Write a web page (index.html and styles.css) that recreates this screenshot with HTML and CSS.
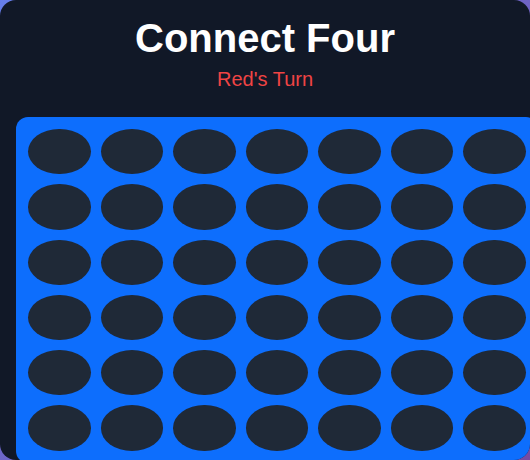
FILE: index.html
```html
<!DOCTYPE html>
<html lang="en">
  <head>
    <meta charset="UTF-8" />
    <meta name="viewport" content="width=device-width, initial-scale=1.0" />
    <title>Connect Four</title>
    <link rel="stylesheet" href="styles.css">
  </head>
  <body>
    <div id="game">
      <h1 class="title">Connect Four</h1>
      <p id="status">Red's Turn</p>
      <div class="board" id="board"></div>
    </div>
    <script>
      // build the 6 x 7 grid of empty slots
      const ROWS = 6;
      const COLS = 7;
      const boardEl = document.getElementById('board');

      for (let r = 0; r < ROWS; r++) {
        for (let c = 0; c < COLS; c++) {
          const cell = document.createElement('div');
          cell.className = 'cell';
          cell.dataset.row = r;
          cell.dataset.col = c;
          boardEl.appendChild(cell);
        }
      }
    </script>
  </body>
</html>
```

FILE: styles.css
```css
/* styles.css */

body {
  margin: 0;
  height: 460px;
  overflow: hidden;
  background: linear-gradient(135deg, #667eea 0%, #764ba2 100%);
  font-family: "Liberation Sans", Arial, sans-serif;
}

#game {
  box-sizing: border-box;
  width: 530px;
  height: 460px;
  padding: 16px;
  background-color: #111827;
  border-radius: 16px;
  overflow: hidden;
  text-align: center;
}

.title {
  margin: 0;
  font-size: 40px;
  line-height: 44px;
  font-weight: bold;
  color: #fff;
}

#status {
  margin: 8px 0 26px;
  font-size: 20px;
  color: #ef4444;
}

.board {
  display: grid;
  grid-template-columns: repeat(7, 62.5px);
  grid-auto-rows: 45.3px;
  gap: 10px;
  width: max-content;
  padding: 12px;
  background-color: #0d6efd;
  border-radius: 12px;
}

.cell {
  background-color: #1f2937;
  border-radius: 50%;
  cursor: pointer;
}
```
